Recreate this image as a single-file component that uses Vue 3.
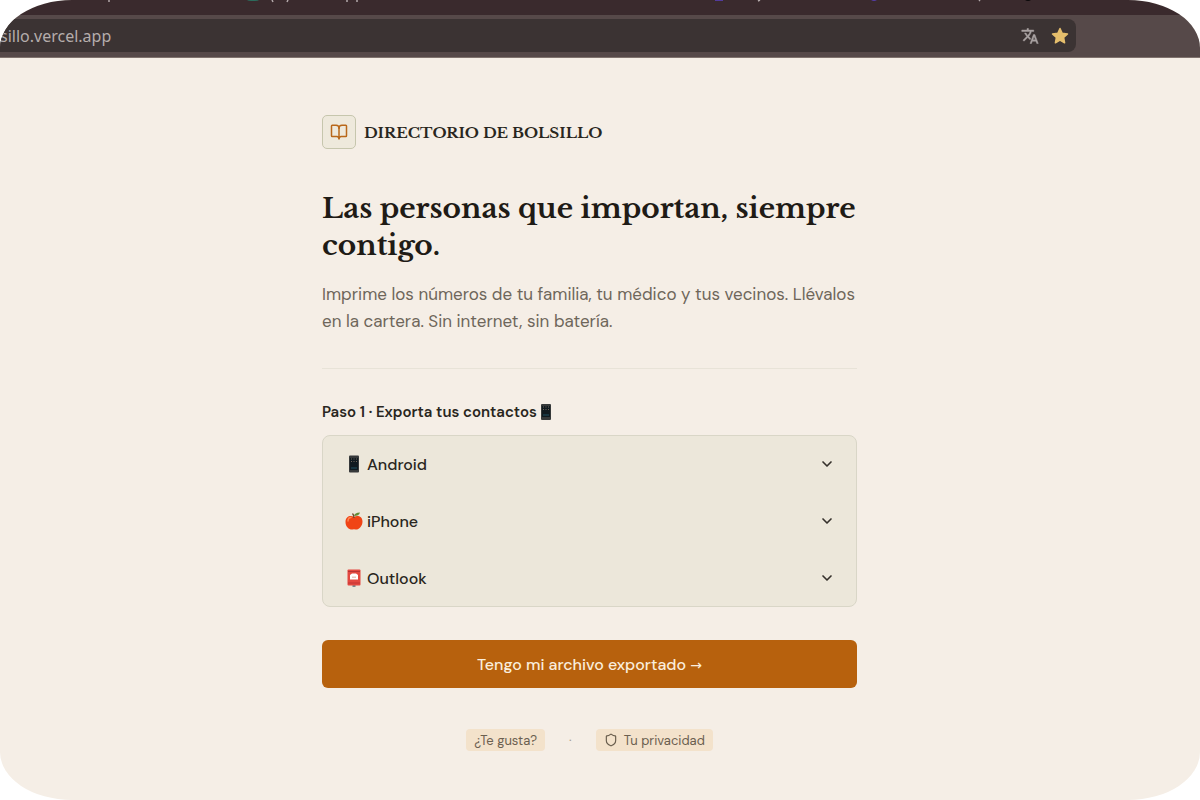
<script setup>
const platforms = [
  { id: 'android', name: 'Android' },
  { id: 'iphone', name: 'iPhone' },
  { id: 'outlook', name: 'Outlook' },
]
</script>

<template>
  <div class="window">
    <div class="tabs" aria-hidden="true">
      <svg class="tab-bits" viewBox="0 0 1200 15" preserveAspectRatio="xMinYMin slice">
        <path d="M247 0h12q-1 1-4 1h-4q-3 0-4-1z" fill="#2c6b5c" />
        <path d="M109 0v2M272 0l1 2M288 0l-1 2M347 0v2M357 0v2M758 1l2-1M979 0l1 1" stroke="#b3a9aa" stroke-width="1.5" />
        <path d="M715 0h8v1h-8zM871 0h6l-2 1h-2z" fill="#523b9c" />
        <path d="M1025 0h6l-2 1h-2z" fill="#0d0a0b" />
      </svg>
    </div>
    <header class="toolbar">
      <div class="address">
        <label class="hidden" for="address">Dirección</label>
        <input id="address" class="url" type="text" value="sillo.vercel.app" />
        <button class="tool" type="button" aria-label="Traducir">
          <svg width="18" height="18" viewBox="0 0 24 24" fill="#aaa3a3" stroke="#aaa3a3" stroke-width="0.6">
            <path d="M12.87 15.07l-2.54-2.51.03-.03A17.52 17.52 0 0 0 14.07 6H17V4h-7V2H8v2H1v2h11.17C11.5 7.92 10.44 9.75 9 11.35 8.07 10.32 7.3 9.19 6.69 8h-2c.73 1.63 1.73 3.17 2.98 4.56l-5.09 5.02L4 19l5-5 3.11 3.11.76-2.04zM18.5 10h-2L12 22h2l1.12-3h4.75L21 22h2l-4.5-12zm-2.62 7l1.62-4.33L19.12 17h-3.24z" />
          </svg>
        </button>
        <button class="tool" type="button" aria-label="Marcador">
          <svg width="18" height="18" viewBox="0 0 18 18">
            <path d="M9 1.5l2.2 4.8 5.3.6-3.9 3.6 1 5.3L9 13.2l-4.6 2.6 1-5.3-3.9-3.6 5.3-.6z" fill="#e5be6c" stroke="#e5be6c" stroke-width="1.5" stroke-linejoin="round" />
          </svg>
        </button>
      </div>
    </header>

    <main class="page">
      <div class="column">
        <div class="brand">
          <span class="brand-icon">
            <svg width="18" height="18" viewBox="0 0 24 24" fill="none" stroke="#b9681a" stroke-width="2" stroke-linecap="round" stroke-linejoin="round">
              <path d="M12 7v14" />
              <path d="M3 18a1 1 0 0 1-1-1V4a1 1 0 0 1 1-1h5a4 4 0 0 1 4 4 4 4 0 0 1 4-4h5a1 1 0 0 1 1 1v13a1 1 0 0 1-1 1h-6a3 3 0 0 0-3 3 3 3 0 0 0-3-3z" />
            </svg>
          </span>
          <span class="brand-name">DIRECTORIO DE BOLSILLO</span>
        </div>

        <h1>Las personas que importan, siempre contigo.</h1>
        <p class="lead">Imprime los números de tu familia, tu médico y tus vecinos. Llévalos en la cartera. Sin internet, sin batería.</p>
        <hr />

        <h2>
          Paso 1 · Exporta tus contactos
          <svg class="phone" width="18" height="18" viewBox="0 0 18 18" aria-hidden="true">
            <rect x="4" y="1" width="10" height="16" rx="1" fill="#36393a" />
            <rect x="5" y="3" width="8" height="11" fill="#101a20" />
            <path d="M6 4h1M8.500 4h1M11 4h1M6 6.500h1M8.500 6.500h1M11 6.500h1" stroke="#71675d" />
            <path d="M6 12h6" stroke="#1e5062" />
          </svg>
        </h2>

        <div class="platforms">
          <button v-for="item in platforms" :key="item.id" class="platform" type="button" aria-expanded="false">
            <svg v-if="item.id === 'android'" width="18" height="18" viewBox="0 0 18 18" aria-hidden="true">
              <rect x="4" y="0.500" width="10" height="17" rx="1" fill="#36393a" />
              <rect x="5" y="3" width="8" height="12" fill="#101a20" />
              <path d="M6 4h1M8.500 4h1M11 4h1M6 6.500h1M8.500 6.500h1M11 6.500h1" stroke="#71675d" />
              <path d="M6 13h6" stroke="#1e5062" />
            </svg>
            <svg v-else-if="item.id === 'iphone'" width="18" height="18" viewBox="0 0 18 18" aria-hidden="true">
              <path d="M9 5C6 3 .5 4 .5 10c0 5 4 8 7 7.500q1.500-.5 3 0c3 .5 7-3 7-8C17.500 4 12 3 9 5z" fill="#f04415" />
              <path d="M3 9c0-2 1-3.500 3-3.500" stroke="#ff8754" stroke-width="1.500" fill="none" stroke-linecap="round" />
              <path d="M9 6Q9 3 7.500 1.500" stroke="#70452a" stroke-width="1.300" fill="none" />
              <path d="M9 4Q9.500.5 15 .5 14 4 9 4z" fill="#638b34" />
            </svg>
            <svg v-else width="18" height="18" viewBox="0 0 18 18" aria-hidden="true">
              <path d="M7.500 15h3v3h-3z" fill="#758b91" />
              <rect x="2.500" y="0.500" width="13" height="16" rx="1" fill="#e34840" />
              <path d="M3 2.500h12" stroke="#b63335" />
              <path d="M5 6l2-1.500h4L13 6v4.500H5z" fill="#fff" />
              <path d="M7 7.500h4v1.500H7z" fill="#e9c7c1" />
              <path d="M3 14h12" stroke="#c23435" />
            </svg>
            <span class="platform-name">{{ item.name }}</span>
            <svg width="16" height="16" viewBox="0 0 24 24" fill="none" stroke="#35312b" stroke-width="2.500" stroke-linecap="round" stroke-linejoin="round" aria-hidden="true">
              <path d="m6 9 6 6 6-6" />
            </svg>
          </button>
        </div>

        <button class="primary" type="button">Tengo mi archivo exportado <span class="arrow">→</span></button>

        <footer class="links">
          <a class="chip" href="#gusta">¿Te gusta?</a>
          <span class="dot">·</span>
          <a class="chip" href="#privacidad">
            <svg width="14" height="14" viewBox="0 0 24 24" fill="none" stroke="#685d4d" stroke-width="2" stroke-linecap="round" stroke-linejoin="round" aria-hidden="true">
              <path d="M20 13c0 5-3.500 7.500-7.660 8.950a1 1 0 0 1-.67-.01C7.500 20.500 4 18 4 13V6a1 1 0 0 1 1-1c2 0 4.500-1.200 6.240-2.720a1.170 1.170 0 0 1 1.520 0C14.510 3.810 17 5 19 5a1 1 0 0 1 1 1z" />
            </svg>
            Tu privacidad
          </a>
        </footer>
      </div>
    </main>
  </div>
</template>

<style>
body {
  background: #fff;
}
</style>

<style scoped>
* {
  box-sizing: border-box;
}
button,
input {
  font: inherit;
  border: 0;
  margin: 0;
  padding: 0;
  background: none;
  color: inherit;
}
svg {
  display: block;
  flex: none;
}
.window {
  display: flex;
  flex-direction: column;
  min-height: 100vh;
  overflow: hidden;
  border-radius: 6%;
  background: #f5eee6;
  color: #292620;
  font-family: "DM Sans", Inter, "Liberation Sans", sans-serif;
}
.tabs {
  height: 15px;
  background: #3a2a2d;
}
.tab-bits {
  width: 100%;
  height: 15px;
}
.toolbar {
  height: 43px;
  padding: 4px 124px 5px 0;
  background: #564949;
  border-bottom: 1px solid #80736e;
}
.address {
  display: flex;
  align-items: center;
  gap: 12px;
  height: 33px;
  padding-right: 7px;
  border-radius: 0 8px 8px 0;
  background: #3b3333;
}
.hidden {
  position: absolute;
  width: 1px;
  height: 1px;
  overflow: hidden;
  clip-path: inset(50%);
}
.url {
  flex: 1;
  min-width: 0;
  height: 28px;
  color: #b5adac;
  font-family: "Noto Sans", sans-serif;
  font-size: 16px;
}
.page {
  padding: 57px 21px 48px 0;
}
.column {
  width: 100%;
  max-width: 535px;
  margin: 0 auto;
}
.brand {
  display: flex;
  align-items: center;
  gap: 8px;
}
.brand-icon {
  display: grid;
  place-items: center;
  width: 34px;
  height: 34px;
  border: 1px solid #c6c6ad;
  border-radius: 5px;
  background: #eee9dc;
}
.brand-name {
  font: bold 15px "Libre Baskerville", "Liberation Serif", serif;
}
h1 {
  margin: 41px 0 0;
  color: #1f1b16;
  font: bold 28px/37px "Libre Baskerville", "Liberation Serif", serif;
}
.lead {
  margin: 17px 0 0;
  color: #6e665a;
  font-size: 17px;
  line-height: 27px;
}
hr {
  margin: 33px 0 0;
  border: 0;
  border-top: 1px solid #e8e3d8;
}
h2 {
  display: flex;
  align-items: center;
  margin: 33px 0 0;
  font-size: 15px;
  font-weight: 600;
  line-height: 20px;
}
.platforms {
  display: grid;
  margin-top: 13px;
  border: 1px solid #d9d6c7;
  border-radius: 8px;
  background: #ece7da;
}
.platform {
  display: flex;
  align-items: center;
  gap: 4px;
  width: 100%;
  height: 56px;
  padding: 0 21px 0 22px;
  font-size: 16px;
  font-weight: 500;
  text-align: left;
}
.platform + .platform {
  margin-top: 1px;
}
.platform-name {
  flex: 1;
}
.primary {
  width: 100%;
  height: 48px;
  margin-top: 33px;
  border-radius: 6px;
  background: #b7610d;
  color: #faeddc;
  font-size: 16px;
  font-weight: 500;
}
.arrow {
  font-family: "DejaVu Sans", sans-serif;
  font-size: 14px;
}
.links {
  display: flex;
  justify-content: center;
  align-items: center;
  gap: 24px;
  margin-top: 41px;
  color: #6b6050;
  font-size: 13px;
}
.chip {
  display: flex;
  align-items: center;
  gap: 6px;
  height: 22px;
  padding: 0 8px;
  border-radius: 4px;
  background: #f3e2cb;
  color: inherit;
  text-decoration: none;
}
.dot {
  color: #a69f93;
}
</style>
